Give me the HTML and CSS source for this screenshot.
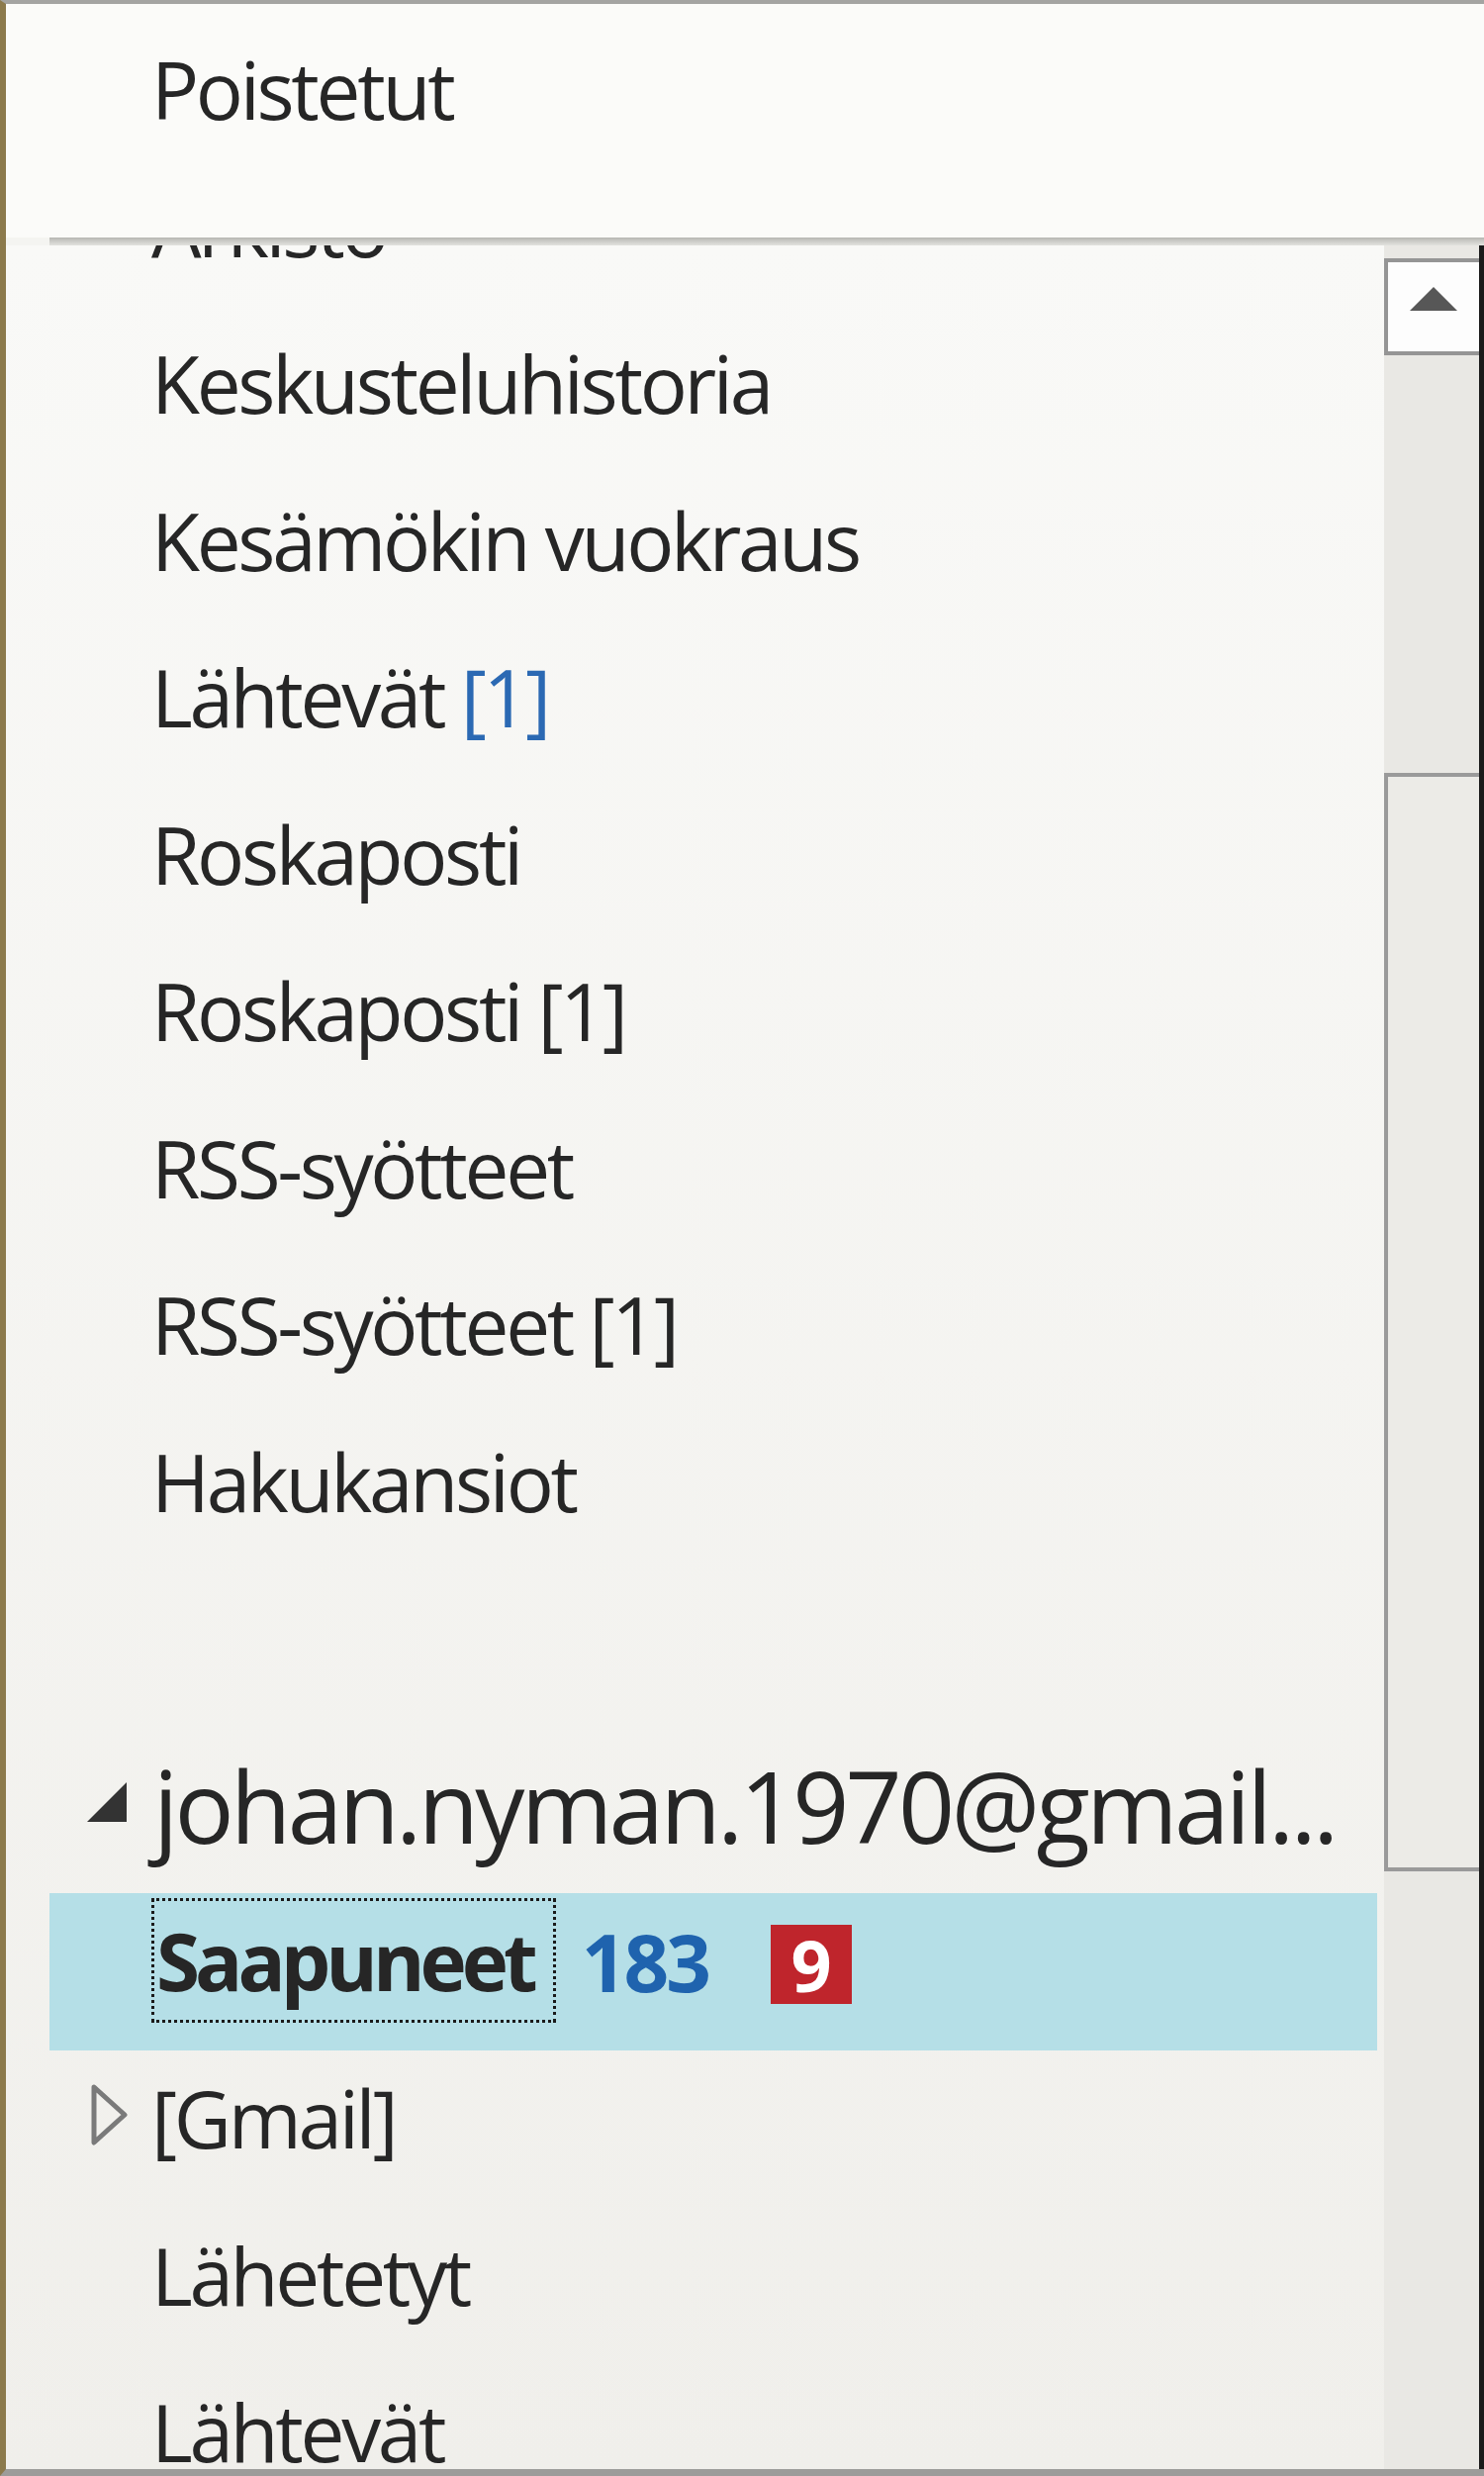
FILE: index.html
```html
<!DOCTYPE html>
<html lang="fi">
<head>
    <meta charset="UTF-8">
    <title>Kansiot</title>
    <link rel="stylesheet" href="styles.css">
</head>
<body>
    <div class="pane">
        <!-- Suosikit -->
        <div class="favorites">
            <div class="row"><span class="label">Poistetut</span></div>
        </div>
        <div class="divider"></div>

        <!-- Kansiopuu + vierityspalkki -->
        <div class="tree-area">
            <ul class="tree">
                <li class="row first"><span class="label">Arkisto</span></li>
                <li class="row"><span class="label">Keskusteluhistoria</span></li>
                <li class="row"><span class="label">Kesämökin vuokraus</span></li>
                <li class="row"><span class="label">Lähtevät <span class="count">[1]</span></span></li>
                <li class="row"><span class="label">Roskaposti</span></li>
                <li class="row"><span class="label">Roskaposti [1]</span></li>
                <li class="row"><span class="label">RSS-syötteet</span></li>
                <li class="row"><span class="label">RSS-syötteet [1]</span></li>
                <li class="row"><span class="label">Hakukansiot</span></li>
                <li class="spacer"></li>
                <li class="row account" title="johan.nyman.1970@gmail.com">
                    <span class="expander open"></span>
                    <span class="label">johan.nyman.1970@gmail...</span>
                </li>
                <li class="row selected">
                    <span class="label focus">Saapuneet</span>
                    <span class="unread">183</span>
                    <span class="badge">9</span>
                </li>
                <li class="row">
                    <span class="expander closed">
                        <svg width="38" height="62" viewBox="0 0 38 62"><path d="M3 3 L34 31 L3 59 Z" fill="none" stroke="#7a7a7a" stroke-width="5" stroke-linejoin="round"/></svg>
                    </span>
                    <span class="label">[Gmail]</span>
                </li>
                <li class="row"><span class="label">Lähetetyt</span></li>
                <li class="row"><span class="label">Lähtevät</span></li>
            </ul>

            <div class="scrollbar">
                <div class="scroll-btn">
                    <svg width="50" height="26" viewBox="0 0 50 26"><path d="M25 1 L49 25 L1 25 Z" fill="#575757"/></svg>
                </div>
                <div class="scroll-track">
                    <div class="scroll-thumb"></div>
                </div>
            </div>
        </div>
    </div>
</body>
</html>
```

FILE: styles.css
```css
* {
    margin: 0;
    padding: 0;
    box-sizing: border-box;
}

body {
    width: 1500px;
    height: 2502px;
    overflow: hidden;
    font-family: "Open Sans", "Noto Sans", Arial, sans-serif;
    color: #262626;
    background-color: #f4f4f1;
}

.pane {
    display: flex;
    flex-direction: column;
    height: 2502px;
    border-top: 4px solid #a4a4a2;
    border-left: 6px solid #8c7a4c;
    border-bottom: 7px solid #9c9c9a;
}

.favorites {
    height: 236px;
    padding-top: 17px;
    background-color: #fbfbf9;
}

.divider {
    height: 8px;
    margin-left: 44px;
    background: linear-gradient(#b6b6b2 0, #c9c9c5 40%, #e2e2de 100%);
}

.tree-area {
    flex: 1;
    display: flex;
    min-height: 0;
    background: linear-gradient(#f9f9f7, #f0efeb);
    border-right: 5px solid #1a1a1a;
}

.tree {
    flex: 1;
    list-style: none;
    overflow: hidden;
    padding-right: 7px;
}

.row {
    position: relative;
    display: flex;
    align-items: center;
    height: 158.5px;
    margin-left: 44px;
    padding-left: 103px;
    padding-bottom: 22px;
    font-size: 80px;
    letter-spacing: -3.3px;
    white-space: nowrap;
}

.tree .first {
    margin-top: -88px;
}

.spacer {
    height: 158.5px;
}

.count {
    color: #2b69b3;
}

/* tilin otsikko */
.row.account {
    height: 168px;
    padding-left: 105px;
    padding-bottom: 10px;
    font-size: 100px;
    letter-spacing: -3.7px;
}

.expander {
    position: absolute;
}

.expander.open {
    top: 56px;
    left: 38px;
    width: 0;
    height: 0;
    border-left: 40px solid transparent;
    border-bottom: 40px solid #333;
}

.expander.closed {
    top: 34px;
    left: 42px;
    display: flex;
}

/* valittu kansio */
.row.selected {
    background-color: #b5dfe7;
    padding-left: 103px;
}

.focus {
    font-weight: bold;
    letter-spacing: -5px;
    border: 3px dotted #1a1a1a;
    padding: 0 20px 0 2px;
    line-height: 120px;
}

.unread {
    margin-left: 26px;
    font-weight: bold;
    color: #1f63ae;
    letter-spacing: -3px;
}

.badge {
    display: flex;
    align-items: center;
    justify-content: center;
    width: 82px;
    height: 80px;
    margin-left: 63px;
    margin-top: 8px;
    background-color: #bf252c;
    color: #fff;
    font-weight: bold;
    font-size: 72px;
    letter-spacing: 0;
}

/* vierityspalkki */
.scrollbar {
    width: 96px;
    display: flex;
    flex-direction: column;
    padding-top: 13px;
    background-color: #e9e8e4;
}

.scroll-btn {
    height: 98px;
    display: flex;
    align-items: center;
    justify-content: center;
    padding-bottom: 16px;
    background-color: #fdfdfd;
    border: 4px solid #959595;
    border-right: none;
}

.scroll-track {
    flex: 1;
    padding-top: 422px;
}

.scroll-thumb {
    height: 1110px;
    background-color: #ecebe7;
    border: 4px solid #9a9a9a;
    border-right: none;
}
```
